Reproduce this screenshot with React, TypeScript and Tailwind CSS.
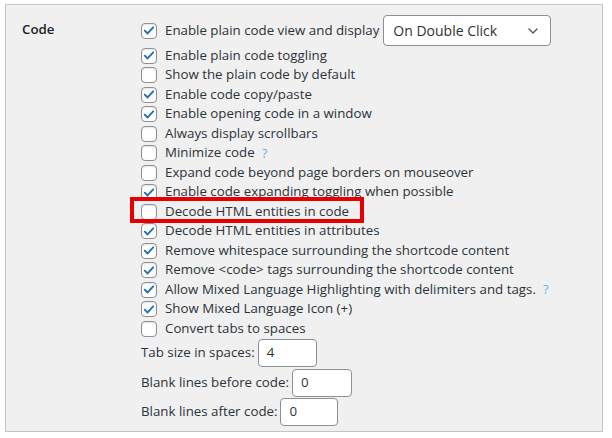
import { ChevronDown } from 'lucide-react';

const Check = ({ on }: { on: boolean }) => (
    <span className="flex-shrink-0 h-4 w-4 rounded-[4px] border border-[#8c8f94] bg-white flex items-center justify-center shadow-[inset_0_1px_2px_rgba(0,0,0,0.1)]">
        {on && (
            <svg viewBox="0 0 16 16" className="h-[15px] w-[15px]">
                <path d="M3.2 8.2 L6.4 11.4 L12.8 4.4" fill="none" stroke="#2271b1" strokeWidth="2.2" strokeLinecap="round" strokeLinejoin="round" />
            </svg>
        )}
    </span>
);

const Help = () => <span className="ml-[7px] text-[#72aee6] text-[13px]">?</span>;

type Row = { label: string; on: boolean; help?: boolean; boxed?: boolean };

const rows: Row[] = [
    { label: 'Enable plain code toggling', on: true },
    { label: 'Show the plain code by default', on: false },
    { label: 'Enable code copy/paste', on: true },
    { label: 'Enable opening code in a window', on: true },
    { label: 'Always display scrollbars', on: false },
    { label: 'Minimize code', on: false, help: true },
    { label: 'Expand code beyond page borders on mouseover', on: false },
    { label: 'Enable code expanding toggling when possible', on: true },
    { label: 'Decode HTML entities in code', on: false, boxed: true },
    { label: 'Decode HTML entities in attributes', on: true },
    { label: 'Remove whitespace surrounding the shortcode content', on: true },
    { label: 'Remove <code> tags surrounding the shortcode content', on: true },
    { label: 'Allow Mixed Language Highlighting with delimiters and tags.', on: true, help: true },
    { label: 'Show Mixed Language Icon (+)', on: true },
    { label: 'Convert tabs to spaces', on: false },
];

const NumField = ({ label, value, width }: { label: string; value: string; width: string }) => (
    <div className="h-[29.5px] flex items-center">
        <span>{label}</span>
        <span className={`ml-[3px] h-[28px] ${width} rounded-[4px] border border-[#8c8f94] bg-white flex items-center pl-[8px]`}>
            {value}
        </span>
    </div>
);

export default function App() {
    return (
        <div className="w-[612px] h-[438px] bg-white pt-[4px] pl-[5px]" style={{ fontFamily: '"Open Sans", "Noto Sans", sans-serif' }}>
            <div className="w-[598px] h-[428px] bg-[#f0f0f1] border border-[#c3c4c7] flex text-[13.3px] text-[#2c3338]">
                <div className="w-[135px] pl-[16px] pt-[15px]">
                    <div className="font-semibold text-[#1d2327]">Code</div>
                </div>
                <div className="pt-[10px] flex flex-col">
                    <div className="h-[31px] flex items-center">
                        <Check on />
                        <span className="ml-[8px]">Enable plain code view and display</span>
                        <span className="ml-[4px] h-[31px] w-[168px] rounded-[4px] border border-[#8c8f94] bg-white flex items-center justify-between pl-[9px] pr-[9px] text-[14px]">
                            On Double Click
                            <ChevronDown className="h-4 w-4 text-[#50575e]" strokeWidth={2} />
                        </span>
                    </div>
                    {rows.map((r) => (
                        <div key={r.label} className="h-[19.5px] flex items-center relative">
                            {r.boxed && (
                                <span className="absolute left-[-11px] top-[-5px] w-[234px] h-[26px] border-[4px] border-[#e60000]" />
                            )}
                            <Check on={r.on} />
                            <span className="ml-[8px] whitespace-nowrap">{r.label}</span>
                            {r.help && <Help />}
                        </div>
                    ))}
                    <NumField label="Tab size in spaces:" value="4" width="w-[59px]" />
                    <NumField label="Blank lines before code:" value="0" width="w-[60px]" />
                    <NumField label="Blank lines after code:" value="0" width="w-[58px]" />
                </div>
            </div>
        </div>
    );
}
